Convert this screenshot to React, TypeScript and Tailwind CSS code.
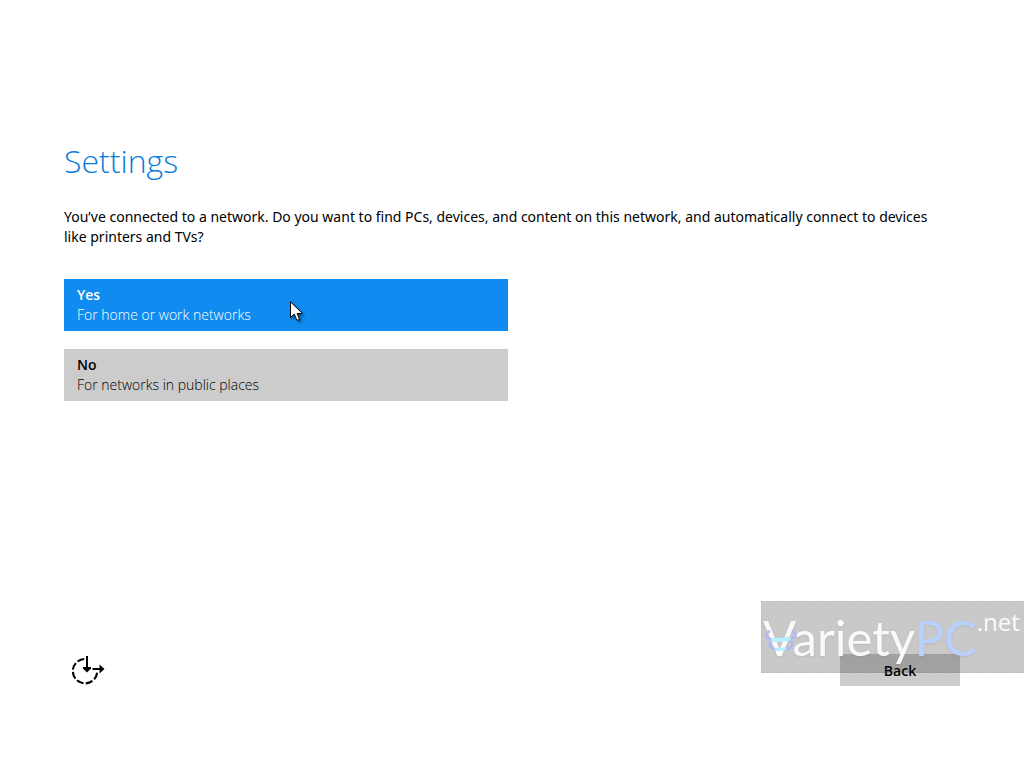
import React from "react";

function EaseOfAccessIcon() {
  return (
    <svg width="36" height="32" viewBox="0 0 36 32" fill="none" aria-hidden="true">
      <path
        d="M13.2 5 A12.2 12.2 0 1 0 26.2 18"
        stroke="#000"
        strokeWidth="2.1"
        strokeDasharray="7.2 2.3"
      />
      <path d="M16 2v12" stroke="#000" strokeWidth="2" />
      <path d="M12 13h8v1.500L16 18.500l-4-4z" fill="#000" />
      <path d="M21.500 15h8.500" stroke="#000" strokeWidth="2" />
      <path d="M28.500 10.500v9l5-4.500z" fill="#000" />
    </svg>
  );
}

function Pointer() {
  return (
    <svg
      className="pointer-events-none absolute left-[226px] top-[22px] drop-shadow-[2px_2px_1px_rgba(0,0,0,0.4)]"
      width="14"
      height="22"
      viewBox="0 0 14 22"
      aria-hidden="true"
    >
      <path
        d="M.5 .8V16.6L4.2 13.1L6.8 19H9.2L9.4 18L7.2 12.5H11.8V11.9Z"
        fill="#fff"
        stroke="#000"
        strokeWidth="1"
      />
    </svg>
  );
}

function Choice(props: { title: string; detail: string; tone: string; children?: React.ReactNode }) {
  return (
    <div className="relative max-w-[444px]">
      <button type="button" className={`block w-full px-[13px] py-[6px] text-left leading-[20px] ${props.tone}`}>
        <span className="block text-[14px] font-semibold">{props.title}</span>
        <span className="block text-[14px] font-light">{props.detail}</span>
      </button>
      {props.children}
    </div>
  );
}

function Watermark() {
  return (
    <div className="pointer-events-none absolute bottom-[95px] right-0 flex h-[72px] w-[263px] items-start border-y border-l border-dashed border-black/5 bg-[#08080f]/[0.22] whitespace-nowrap text-[#fafafa]">
      <span className="relative pl-px font-['Lato','Open_Sans',sans-serif] text-[49px] leading-[70px] drop-shadow-[0_1px_1px_rgba(0,0,0,0.08)]">
        Variety<span className="text-[#b9d0ff]">PC</span>
      </span>
      <span className="relative text-[24px] leading-[40px]">.net</span>
      <svg className="absolute left-[2px] top-[26px]" width="34" height="26" viewBox="0 0 34 26" fill="none" aria-hidden="true">
        <path d="M6 3C-1 6 3 11 8 11.500M28 3C35 6 31 11 24 11.500" stroke="#b2b8f3" strokeWidth="2.5" />
        <path d="M8 13C2 17 8 21 12 21.500M26 13C32 17 26 21 20 21.500" stroke="#b2b8f3" strokeWidth="2.5" />
        <path d="M7 11Q16 13.500 26 10" stroke="#b5f0ff" strokeWidth="4" />
        <path d="M11 21Q16 22 22 20.500" stroke="#b5f0ff" strokeWidth="3" />
      </svg>
    </div>
  );
}

export default function App() {
  return (
    <div className="relative flex min-h-screen flex-col overflow-hidden bg-white px-[64px] pb-[82px] pt-[137px] font-['Open_Sans','Noto_Sans',sans-serif] text-black">
      <main>
        <h1 className="text-[32px] font-light leading-[48px] text-[#0a7cdc]">Settings</h1>
        <p className="mt-[22px] max-w-[880px] font-['Noto_Sans','Open_Sans',sans-serif] text-[14px] leading-[20px]">
          You’ve connected to a network. Do you want to find PCs, devices, and content on this network, and
          automatically connect to devices like printers and TVs?
        </p>
        <div className="mt-[32px] flex flex-col gap-[18px]">
          <Choice title="Yes" detail="For home or work networks" tone="bg-[#108bf0] text-white">
            <Pointer />
          </Choice>
          <Choice title="No" detail="For networks in public places" tone="bg-[#cccccc] text-black" />
        </div>
      </main>
      <footer className="mt-auto flex items-end justify-between">
        <button type="button" aria-label="Ease of access" className="ml-[7px]">
          <EaseOfAccessIcon />
        </button>
        <button type="button" className="h-[32px] w-[120px] bg-[#cccccc] pt-[2px] text-[14px] font-semibold leading-[20px]">
          Back
        </button>
      </footer>
      <Watermark />
    </div>
  );
}
